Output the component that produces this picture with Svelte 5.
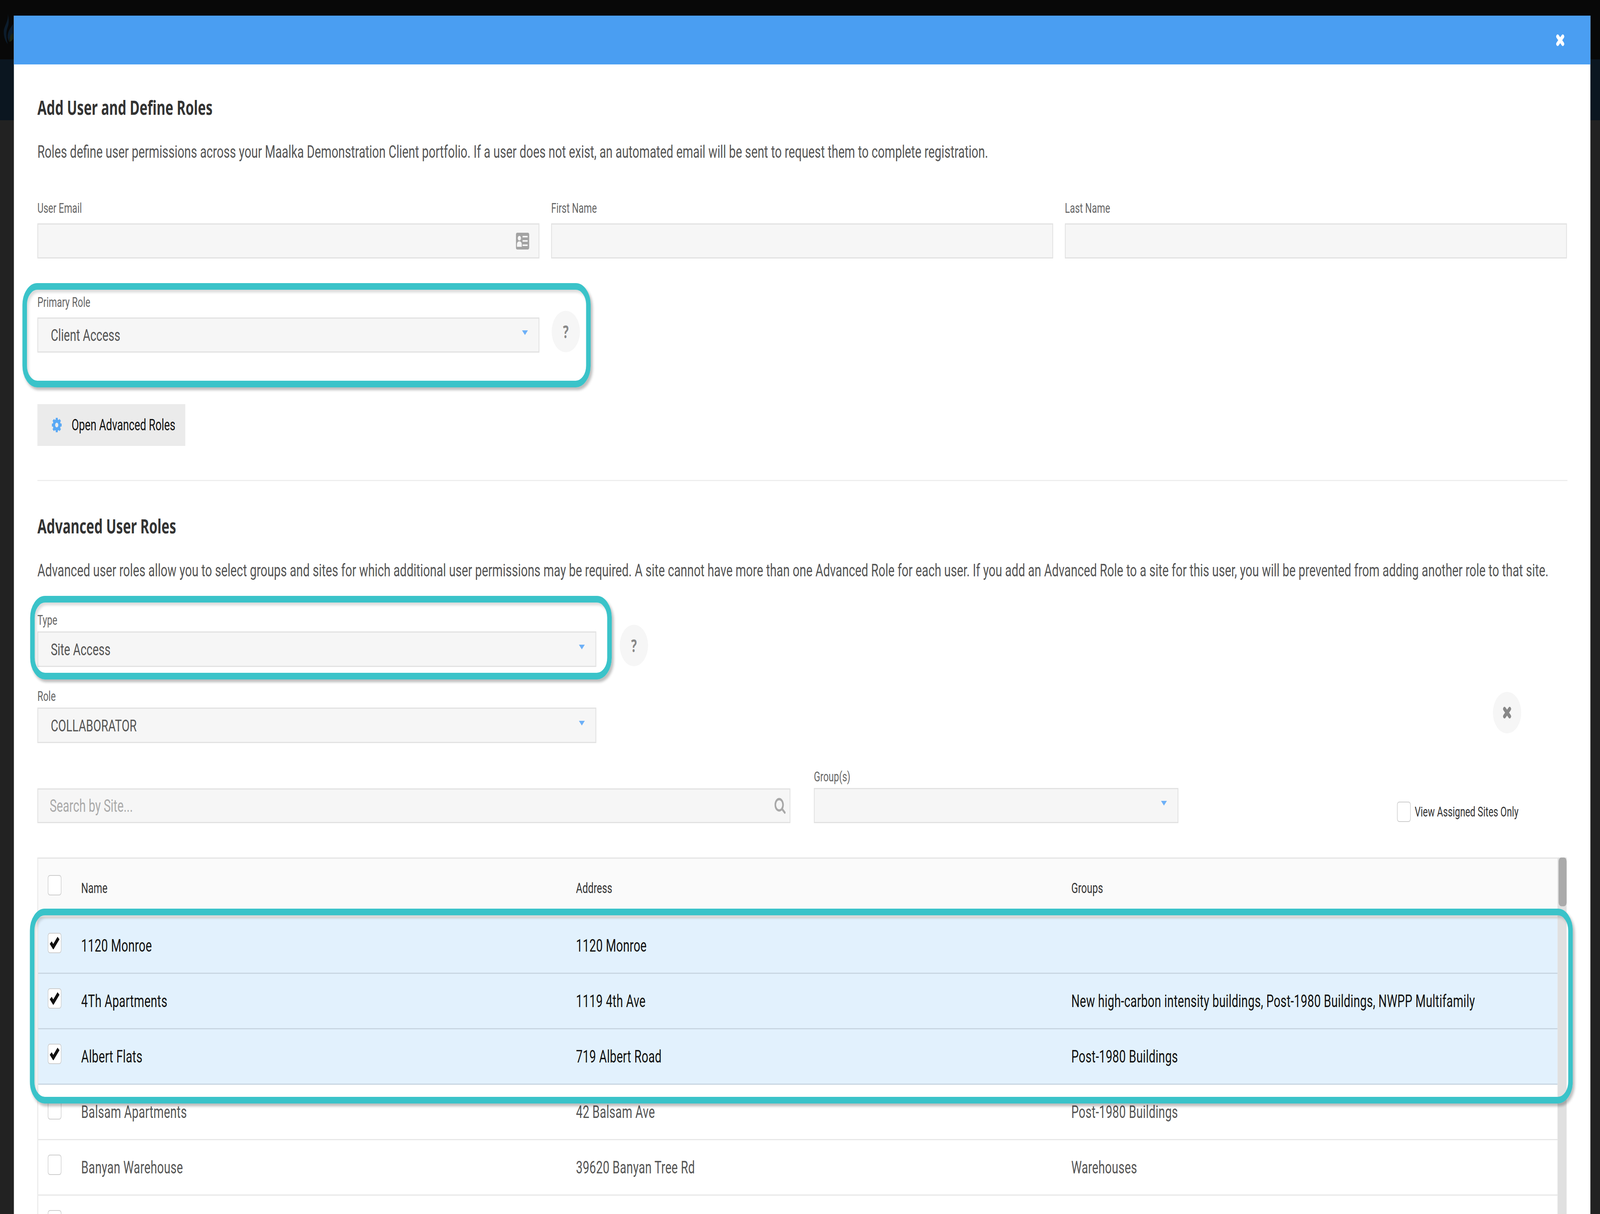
<script>
  const rows = [
    { name: '1120 Monroe', address: '1120 Monroe', groups: '', checked: true },
    { name: '4Th Apartments', address: '1119 4th Ave', groups: 'New high-carbon intensity buildings, Post-1980 Buildings, NWPP Multifamily', checked: true },
    { name: 'Albert Flats', address: '719 Albert Road', groups: 'Post-1980 Buildings', checked: true },
    { name: 'Balsam Apartments', address: '42 Balsam Ave', groups: 'Post-1980 Buildings', checked: false },
    { name: 'Banyan Warehouse', address: '39620 Banyan Tree Rd', groups: 'Warehouses', checked: false },
    { name: '', address: '', groups: '', checked: false }
  ];
  const teeth = [0, 45, 90, 135, 180, 225, 270, 315];
  // the window can come up narrower than the 5992px design, keep all of it in frame
  const fit = window.innerWidth / 5992;
</script>

{#snippet times()}
  <svg class="times" viewBox="0 0 30 30"><path d="M6 6 24 24M24 6 6 24" /></svg>
{/snippet}

<div class="frame">
  <div class="page" style="transform: scaleX({fit})">
    <svg class="logo" viewBox="0 0 40 80">
      <path d="M16 0C20 14 8 26 2 40 -2 56 8 72 16 78 10 62 8 48 16 34 22 24 20 10 16 0Z" fill="#0c1c2c" />
      <path d="M36 26C30 34 14 44 16 62L20 72C22 60 30 54 36 50Z" fill="#0c1c2c" />
      <path d="M36 50C28 52 22 60 22 72 28 72 34 68 36 64Z" fill="#1c2412" />
    </svg>

    <div class="modal">
      <div class="modal-head">
        {@render times()}
      </div>

      <div class="modal-body">
        <h2 class="first">Add User and Define Roles</h2>
        <p class="lead">Roles define user permissions across your Maalka Demonstration Client portfolio. If a user does not exist, an automated email will be sent to request them to complete registration.</p>

        <div class="three">
          <div class="field">
            <div class="label">User Email</div>
            <div class="input">
              <svg class="card" viewBox="0 0 50 43">
                <rect width="50" height="43" rx="5" fill="#a3a3a3" />
                <circle cx="13" cy="14" r="6" fill="#f6f6f6" />
                <path d="M4 36V30C4 25 8 22 13 22S22 25 22 30V36Z" fill="#f6f6f6" />
                <path d="M25 10H44M25 21H44M25 32H44" stroke="#f6f6f6" stroke-width="4" />
              </svg>
            </div>
          </div>
          <div class="field">
            <div class="label">First Name</div>
            <div class="input"></div>
          </div>
          <div class="field">
            <div class="label">Last Name</div>
            <div class="input"></div>
          </div>
        </div>

        <div class="primary-row">
          <div class="field primary">
            <div class="label">Primary Role</div>
            <div class="input select"><span>Client Access</span><i class="caret"></i></div>
          </div>
          <div class="round help">?</div>
        </div>

        <button class="adv-btn">
          <svg class="gear" viewBox="0 0 34 34">
            {#each teeth as t}
              <rect x="13.5" y="0" width="7" height="8" fill="#5aa9f5" transform="rotate({t} 17 17)" />
            {/each}
            <circle cx="17" cy="17" r="9.5" fill="none" stroke="#5aa9f5" stroke-width="8" />
          </svg>
          Open Advanced Roles
        </button>

        <div class="divider"></div>

        <h2>Advanced User Roles</h2>
        <p class="lead">Advanced user roles allow you to select groups and sites for which additional user permissions may be required. A site cannot have more than one Advanced Role for each user. If you add an Advanced Role to a site for this user, you will be prevented from adding another role to that site.</p>

        <div class="type-row">
          <div class="field tight wide">
            <div class="label">Type</div>
            <div class="input select"><span>Site Access</span><i class="caret"></i></div>
          </div>
          <div class="round help">?</div>
        </div>

        <div class="role-row">
          <div class="field tight wide">
            <div class="label">Role</div>
            <div class="input select"><span>COLLABORATOR</span><i class="caret"></i></div>
          </div>
          <div class="round remove">
            <svg class="times gray" viewBox="0 0 30 30"><path d="M6 6 24 24M24 6 6 24" /></svg>
          </div>
        </div>

        <div class="filter-row">
          <div class="input search">
            <span class="placeholder">Search by Site...</span>
            <svg class="lens" viewBox="0 0 42 42">
              <circle cx="18" cy="18" r="14.5" fill="none" stroke="#a8a8a8" stroke-width="6" />
              <path d="M29 29 39 38" stroke="#a8a8a8" stroke-width="6" stroke-linecap="round" />
            </svg>
          </div>
          <div class="field tight groups">
            <div class="label">Group(s)</div>
            <div class="input select"><span></span><i class="caret"></i></div>
          </div>
          <label class="assigned">
            <span class="check"></span>
            View Assigned Sites Only
          </label>
        </div>

        <div class="table-wrap">
          <div class="table">
            <div class="tr head">
              <div class="cell"><span class="check"></span></div>
              <div>Name</div>
              <div>Address</div>
              <div>Groups</div>
            </div>
            {#each rows as row}
              <div class="tr" class:selected={row.checked}>
                <div class="cell">
                  <span class="check">
                    {#if row.checked}
                      <svg viewBox="0 0 38 34"><path d="M4 17 14 28 34 5" /></svg>
                    {/if}
                  </span>
                </div>
                <div>{row.name}</div>
                <div>{row.address}</div>
                <div>{row.groups}</div>
              </div>
            {/each}
          </div>
          <div class="scrollbar"><div class="thumb"></div></div>
        </div>
      </div>
    </div>

    <div class="ring ring-primary"></div>
    <div class="ring ring-type"></div>
    <div class="ring ring-rows"></div>
  </div>
</div>

<style>
  :global(body) {
    margin: 0;
    background: #222;
  }
  .frame {
    width: 100vw;
    height: 3109px;
    overflow: hidden;
  }
  .page {
    position: relative;
    width: 5992px;
    height: 3109px;
    overflow: hidden;
    padding: 40px 36px 0 52px;
    box-sizing: border-box;
    transform-origin: 0 0;
    background: linear-gradient(#080808 0 152px, #0b1620 152px 308px, #222 308px);
    font-family: Roboto, "Noto Sans", sans-serif;
    color: #555;
  }
  .logo {
    position: absolute;
    left: 13px;
    top: 35px;
    width: 40px;
    height: 80px;
  }
  .modal {
    position: relative;
    height: 3069px;
    background: #fff;
  }
  .modal-head {
    height: 125px;
    background: #4a9ef2;
    display: flex;
    justify-content: flex-end;
    align-items: center;
    padding-right: 97px;
    box-sizing: border-box;
  }
  .times {
    width: 32px;
    height: 32px;
    fill: none;
    stroke: #fff;
    stroke-width: 10;
    stroke-linecap: round;
  }
  .times.gray {
    stroke: #888;
  }
  .modal-body {
    padding: 80px 86px 0 88px;
  }
  h2 {
    margin: 85px 0 0;
    height: 60px;
    line-height: 60px;
    font-family: "Noto Sans", sans-serif;
    font-size: 50px;
    font-weight: 700;
    color: #333;
  }
  h2.first {
    margin-top: 0;
  }
  .lead {
    margin: 59px 0 0;
    height: 50px;
    line-height: 50px;
    font-size: 44.8px;
    white-space: nowrap;
  }
  .three {
    display: grid;
    grid-template-columns: repeat(3, 1880px);
    gap: 44px;
    margin-top: 100px;
  }
  .label {
    height: 40px;
    line-height: 40px;
    margin-bottom: 18px;
    font-size: 35px;
    color: #666;
  }
  .tight .label {
    margin-bottom: 8px;
  }
  .input {
    height: 90px;
    box-sizing: border-box;
    background: #f6f6f6;
    border: 3px solid #e2e2e2;
    display: flex;
    align-items: center;
    justify-content: space-between;
  }
  .card {
    width: 50px;
    height: 43px;
    margin-left: auto;
    margin-right: 35px;
  }
  .select {
    padding: 0 40px 0 47px;
    font-size: 43px;
    color: #555;
  }
  .caret {
    width: 0;
    height: 0;
    margin-bottom: 12px;
    border-left: 11px solid transparent;
    border-right: 11px solid transparent;
    border-top: 12px solid #6db0f7;
  }
  .primary-row {
    display: flex;
    gap: 46px;
    margin-top: 93px;
  }
  .primary {
    width: 1880px;
  }
  .round {
    width: 106px;
    height: 106px;
    border-radius: 50%;
    background: #f6f6f6;
    display: flex;
    align-items: center;
    justify-content: center;
    flex: none;
  }
  .help {
    margin-top: 41px;
    font-family: "Noto Sans", sans-serif;
    font-weight: 700;
    font-size: 44px;
    color: #888;
  }
  .adv-btn {
    display: flex;
    align-items: center;
    gap: 37px;
    width: 554px;
    height: 107px;
    margin-top: 132px;
    padding: 0 0 0 54px;
    box-sizing: border-box;
    border: 0;
    background: #ebebeb;
    font-family: inherit;
    font-size: 40px;
    color: #111;
    white-space: nowrap;
  }
  .gear {
    width: 37px;
    height: 37px;
    flex: none;
  }
  .divider {
    height: 3px;
    margin-top: 87px;
    background: #eee;
  }
  .type-row {
    display: flex;
    gap: 88px;
    margin-top: 83px;
  }
  .wide {
    width: 2093px;
  }
  .type-row .help {
    margin-top: 31px;
  }
  .wide .input {
    height: 91px;
  }
  .role-row {
    display: flex;
    justify-content: space-between;
    margin-top: 56px;
  }
  .remove {
    margin: 8px 173px 0 0;
  }
  .filter-row {
    display: flex;
    align-items: flex-end;
    gap: 88px;
    margin-top: 67px;
  }
  .search {
    width: 2820px;
    height: 89px;
    padding: 0 15px 0 43px;
    font-size: 44px;
  }
  .placeholder {
    color: #aaa;
  }
  .lens {
    width: 42px;
    height: 42px;
  }
  .groups {
    width: 1365px;
  }
  .assigned {
    display: flex;
    align-items: center;
    gap: 15px;
    margin: 0 183px 3px auto;
    font-size: 34.7px;
    color: #333;
  }
  .check {
    display: block;
    width: 51px;
    height: 52px;
    box-sizing: border-box;
    background: #fff;
    border: 2px solid #ccc;
    border-radius: 8px;
    padding: 6px 5px;
  }
  .check svg {
    display: block;
    width: 37px;
    height: 34px;
    fill: none;
    stroke: #111;
    stroke-width: 10;
  }
  .table-wrap {
    display: flex;
    margin-top: 88px;
  }
  .table {
    width: 5693px;
    box-sizing: border-box;
    border-top: 3px solid #e5e5e5;
    border-left: 3px solid #e5e5e5;
  }
  .tr {
    display: grid;
    grid-template-columns: 161px 1853px 1855px 1fr;
    align-items: center;
    height: 142px;
    box-sizing: border-box;
    border-bottom: 3px solid #e8e8e8;
    font-size: 44px;
    letter-spacing: 0.4px;
  }
  .tr.head {
    height: 153px;
    background: #fafafa;
    font-size: 37px;
    letter-spacing: 0;
    color: #333;
  }
  .tr.selected {
    background: #e2f1fd;
    border-bottom-color: #c8d6e2;
    color: #111;
  }
  .cell {
    padding: 0 0 14px 36px;
  }
  .scrollbar {
    width: 34px;
    height: 913px;
    background: #e0e0e0;
    flex: none;
  }
  .thumb {
    width: 30px;
    height: 125px;
    margin-left: 4px;
    background: #aaa;
    border-radius: 10px;
  }
  .ring {
    position: absolute;
    box-sizing: border-box;
    border: 17px solid #3ac3c9;
    border-radius: 56px;
    box-shadow: 6px 7px 8px rgba(0, 0, 0, 0.26), inset 6px 7px 8px rgba(0, 0, 0, 0.14);
  }
  .ring-primary {
    left: 84px;
    top: 725px;
    width: 2128px;
    height: 267px;
  }
  .ring-type {
    left: 113px;
    top: 1526px;
    width: 2178px;
    height: 214px;
  }
  .ring-rows {
    left: 112px;
    top: 2327px;
    width: 5778px;
    height: 499px;
  }
</style>
